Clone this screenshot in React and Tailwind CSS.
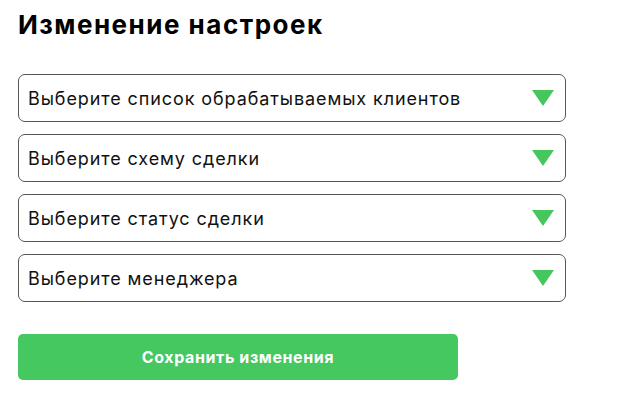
import React from "react";

const selects = [
  "Выберите список обрабатываемых клиентов",
  "Выберите схему сделки",
  "Выберите статус сделки",
  "Выберите менеджера",
];

const Arrow = () => (
  <svg width="22" height="16" viewBox="0 0 22 16">
    <polygon points="0,0 22,0 11,16" fill="#45c75e" />
  </svg>
);

const App = () => {
  return (
    <div className="min-h-screen bg-white pl-[18px] pt-[10px] font-['Inter',sans-serif] text-[#111]">
      <h1 className="text-[26px] font-bold leading-[30px] tracking-[1.5px] text-black">
        Изменение настроек
      </h1>

      {/* Dropdowns */}
      <div className="mt-[34px] flex w-[548px] flex-col gap-[12px]">
        {selects.map((label) => (
          <div
            key={label}
            className="flex h-[48px] items-center justify-between rounded-[7px] border border-[#555] pl-[9px] pr-[11px]"
          >
            <span className="text-[18px] tracking-[0.9px]">{label}</span>
            <Arrow />
          </div>
        ))}
      </div>

      <button className="mt-[32px] flex h-[46px] w-[440px] items-center justify-center rounded-[5px] bg-[#44c85f] text-[16px] font-bold tracking-[0.6px] text-white">
        Сохранить изменения
      </button>
    </div>
  );
};

export default App;
